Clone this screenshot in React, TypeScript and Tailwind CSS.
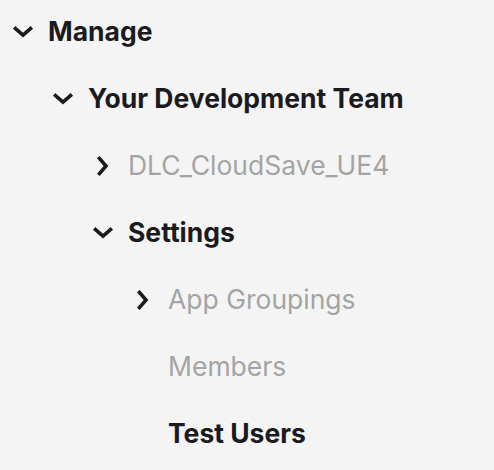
import React from 'react';

type Node = {
  label: string;
  depth: number;
  chevron?: 'down' | 'right';
  active?: boolean;
};

const ITEMS: Node[] = [
  { label: 'Manage', depth: 0, chevron: 'down', active: true },
  { label: 'Your Development Team', depth: 1, chevron: 'down', active: true },
  { label: 'DLC_CloudSave_UE4', depth: 2, chevron: 'right' },
  { label: 'Settings', depth: 2, chevron: 'down', active: true },
  { label: 'App Groupings', depth: 3, chevron: 'right' },
  { label: 'Members', depth: 3 },
  { label: 'Test Users', depth: 3, active: true },
];

const indent = ['pl-[12px]', 'pl-[52px]', 'pl-[92px]', 'pl-[132px]'];

const Chevron = ({ dir }: { dir: 'down' | 'right' }) => (
  <svg width="22" height="22" viewBox="0 0 22 22" className="shrink-0 text-[#1b1b1f]">
    {dir === 'down' ? (
      <path d="M3.5 7.5l7.5 6.5 7.5-6.5" fill="none" stroke="currentColor" strokeWidth="3.6" strokeLinecap="square" />
    ) : (
      <path d="M7.5 3.5l6.5 7.5-6.5 7.5" fill="none" stroke="currentColor" strokeWidth="3.6" strokeLinecap="square" />
    )}
  </svg>
);

export default function App() {
  return (
    <div className="w-[494px] h-[470px] bg-[#f4f4f4] overflow-hidden" style={{ fontFamily: 'Inter, "Open Sans", sans-serif' }}>
      {ITEMS.map((item) => (
        <div key={item.label} className={`flex items-center h-[67px] pb-[4px] ${indent[item.depth]}`}>
          <div className="w-[36px] flex items-center">
            {item.chevron && <Chevron dir={item.chevron} />}
          </div>
          <span
            className={`text-[26.5px] leading-none ${
              item.active ? 'font-bold text-[#1b1b1f]' : 'font-normal text-[#a4a4a4]'
            }`}
          >
            {item.label}
          </span>
        </div>
      ))}
    </div>
  );
}
